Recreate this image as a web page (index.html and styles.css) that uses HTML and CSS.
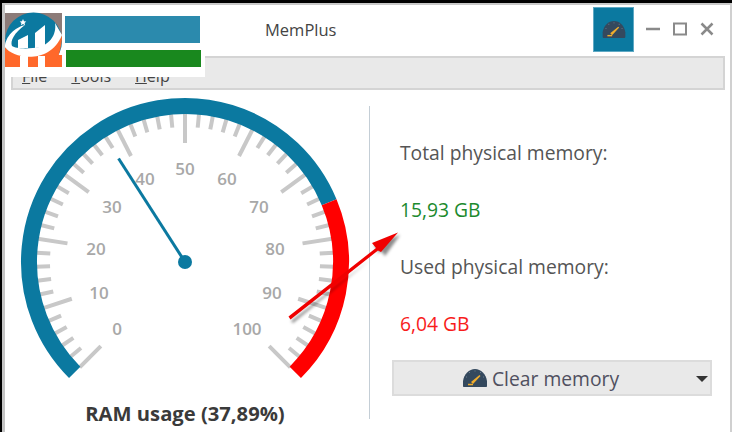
FILE: index.html
```html
<!DOCTYPE html>
<html lang="en">
<head>
  <meta charset="UTF-8">
  <title>MemPlus</title>
  <link rel="stylesheet" href="styles.css">
</head>
<body>
  <svg class="icon-defs" width="0" height="0">
    <symbol id="dash-icon" viewBox="0 0 24 18">
      <path d="M0 17c0-1 0-3 0-5C1 5 6 0 12 0s11 5 12 12c0 2 0 4 0 5 0 .6-.4 1-1 1H1c-.6 0-1-.4-1-1z" fill="#34495e"/>
      <path d="M6 3.500h1M11.500 2h1M17 3.500h1M3 8h1M20 8h1" stroke="#6d7c8c" stroke-width="1"/>
      <path d="M8 13L16.500 6l1 1L10 15z" fill="#f0ad2c"/>
      <path d="M5 15.500h5" stroke="#f0ad2c" stroke-width="1.500"/>
    </symbol>
  </svg>

  <div class="window">
    <header class="titlebar">
      <div class="title">MemPlus</div>
      <div class="dash-btn"><svg width="24" height="17"><use href="#dash-icon"/></svg></div>
      <div class="win-controls">
        <svg width="14" height="14" viewBox="0 0 14 14"><path d="M0 7h14" stroke="#8a8a8a" stroke-width="2.500"/></svg>
        <svg width="14" height="14" viewBox="0 0 14 14"><rect x="1" y="1.500" width="12" height="11" fill="none" stroke="#8a8a8a" stroke-width="2"/></svg>
        <svg width="14" height="14" viewBox="0 0 14 14"><path d="M1.500 1.500l11 11M12.500 1.500l-11 11" stroke="#8a8a8a" stroke-width="2.500"/></svg>
      </div>
    </header>

    <nav class="menu">
      <span><u>F</u>ile</span>
      <span><u>T</u>ools</span>
      <span><u>H</u>elp</span>
    </nav>

    <main class="content">
      <section class="gauge-panel">
        <svg id="gauge" class="gauge" width="360" height="300" viewBox="0 0 360 300"></svg>
        <div class="gauge-label">RAM usage (37,89%)</div>
      </section>

      <section class="info-panel">
        <div class="info-label">Total physical memory:</div>
        <div class="info-value green">15,93 GB</div>
        <div class="info-label">Used physical memory:</div>
        <div class="info-value red">6,04 GB</div>
        <button class="clear-btn" type="button">
          <span class="clear-text"><svg width="24" height="18"><use href="#dash-icon"/></svg>Clear memory</span>
          <span class="caret"></span>
        </button>
      </section>
    </main>
  </div>

  <!-- pasted over the screenshot -->
  <div class="logo-block">
    <svg class="logo-mark" width="57" height="56" viewBox="0 0 57 56">
      <path d="M0 2h57v26H0z" fill="#8c7b78"/>
      <path d="M0 28h57v28H0z" fill="#fff"/>
      <path d="M0 44h57v12H0z" fill="#ff682b"/>
      <circle cx="28.500" cy="30" r="28.500" fill="#0b79a0"/>
      <path d="M57 24C57 40 50 56 46 56H0V36c10 12 45 14 57-12z" fill="#ff682b"/>
      <path d="M0 36C8 48 45 54 57 24L50 12C52 24 44 36 28 37 18 38 10 37 7 35 5 30 9 22 20 14 10 16 0 26 0 36z" fill="#fff"/>
      <path d="M15 45h8v11h-8zM33 45h7v11h-7z" fill="#fff"/>
      <path d="M13 29l10-5v13H13zM30 22l10-8v22l-10 1z" fill="#fff"/>
      <path d="M18 8l1 2.200 2.300.2-1.700 1.600.5 2.300-2.100-1.200-2.100 1.200.5-2.300-1.700-1.600 2.300-.2z" fill="#fff"/>
    </svg>
    <div class="logo-bars">
      <div class="logo-bar-blue"></div>
      <div class="logo-bar-green"></div>
    </div>
  </div>

  <svg class="arrow" width="732" height="432" viewBox="0 0 732 432">
    <defs>
      <filter id="arrow-shadow" x="-10%" y="-10%" width="120%" height="120%">
        <feGaussianBlur stdDeviation="1.500"/>
      </filter>
    </defs>
    <path d="M289 319L377 251 372 243 398 233 383 254 379 249 291 321z" fill="#000" fill-opacity=".45" filter="url(#arrow-shadow)" transform="translate(2 2)"/>
    <path d="M288.500 316.500L376 248 372 243 398 232.500 381 252 378 250.500 290.500 319.500z" fill="#f00000"/>
  </svg>

  <script src="gauge.js"></script>
</body>
</html>
```

FILE: styles.css
```css
* {
  box-sizing: border-box;
}

html, body {
  margin: 0;
  height: 100%;
  overflow: hidden;
}

body {
  font-family: 'Open Sans', sans-serif;
  background-color: #000000;
  color: #555555;
  position: relative;
}

.icon-defs {
  position: absolute;
}

.window {
  margin: 3px 0 0 2px;
  height: 429px;
  background-color: #ffffff;
  border-top: 2px solid #c9c9c9;
  border-left: 3px solid #c4c4c4;
  border-right: 2px solid #d0d0d0;
}

.titlebar {
  height: 49px;
  display: flex;
  align-items: flex-start;
  position: relative;
}

.title {
  position: absolute;
  left: 260px;
  top: 14px;
  font-size: 16.500px;
  line-height: 22px;
  color: #444444;
}

.dash-btn {
  margin: 2px 0 0 588px;
  width: 41px;
  height: 45px;
  background-color: #0b79a0;
  border: 1px solid #5fa9c4;
  display: flex;
  align-items: center;
  justify-content: center;
}

.win-controls {
  margin: 17px 0 0 12px;
  display: flex;
  gap: 13px;
}

.menu {
  margin: 2px 5px 0 6px;
  height: 34px;
  padding: 8px 0 0 9px;
  display: flex;
  gap: 24px;
  background-color: #e9e9e9;
  border: 2px solid #d4d4d4;
  font-size: 16px;
  line-height: 20px;
  color: #444444;
}

.content {
  display: flex;
  height: 343px;
}

.gauge-panel {
  width: 364px;
  position: relative;
}

.gauge {
  display: block;
  margin: 5px 0 0 0;
}

.gauge-label {
  position: absolute;
  left: 0;
  top: 311px;
  width: 360px;
  text-align: center;
  font-size: 20.200px;
  line-height: 24px;
  font-weight: bold;
  color: #3a3a3a;
}

.info-panel {
  margin-top: 16px;
  height: 313px;
  border-left: 1px solid #c4ced6;
  padding: 35px 0 0 22px;
  flex: 1;
}

.info-label {
  font-size: 19.300px;
  line-height: 24px;
  margin-left: 8px;
  color: #555555;
}

.info-value {
  font-size: 19.300px;
  line-height: 24px;
  margin: 33px 0 33px 8px;
}

.green {
  color: #1c8a2e;
}

.red {
  color: #f81c1c;
}

.clear-btn {
  position: relative;
  display: block;
  margin-top: -9px;
  width: 320px;
  height: 36px;
  background-color: #e9e9e9;
  border: 2px solid #dcdcdc;
  padding: 0 22px 0 0;
  font: inherit;
  font-size: 19.300px;
  color: #505060;
}

.clear-text {
  display: flex;
  align-items: center;
  justify-content: center;
  gap: 5px;
}

.caret {
  position: absolute;
  right: 2px;
  top: 14px;
  border-left: 6px solid transparent;
  border-right: 6px solid transparent;
  border-top: 6px solid #333333;
}

.logo-block {
  position: absolute;
  left: 5px;
  top: 5px;
  width: 200px;
  height: 72px;
  background-color: #ffffff;
  display: flex;
  padding-top: 6px;
}

.logo-mark {
  flex: none;
}

.logo-bars {
  margin-left: 3px;
}

.logo-bar-blue {
  width: 135px;
  height: 27px;
  margin-top: 5px;
  background-color: #2b8aad;
}

.logo-bar-green {
  width: 135px;
  height: 17px;
  margin: 7px 0 0 1px;
  background-color: #19881e;
}

.arrow {
  position: absolute;
  left: 0;
  top: 0;
  pointer-events: none;
}
```

FILE: gauge.js
```js
// Gauge drawn around a fixed centre, angles in degrees from straight up
const svg = document.getElementById('gauge');
const NS = 'http://www.w3.org/2000/svg';
const cx = 180;
const cy = 167;
const value = 37.89;

// label centres, they don't sit on a clean circle
const labels = [
  [112, 234], [94, 198], [91, 154], [107, 112], [140, 84], [180, 74],
  [222, 84], [254, 112], [270, 154], [267, 198], [242, 234]
];

function angleFor(v) {
  return -135 + v * 2.7;
}

function point(r, deg) {
  const a = deg * Math.PI / 180;
  return [cx + r * Math.sin(a), cy - r * Math.cos(a)];
}

function add(tag, attrs, text) {
  const el = document.createElementNS(NS, tag);
  Object.keys(attrs).forEach(k => el.setAttribute(k, attrs[k]));
  if (text !== undefined) el.textContent = text;
  svg.appendChild(el);
  return el;
}

function band(from, to, color) {
  const r = 156;
  const [x1, y1] = point(r, angleFor(from));
  const [x2, y2] = point(r, angleFor(to));
  const large = angleFor(to) - angleFor(from) > 180 ? 1 : 0;
  add('path', {
    d: `M${x1} ${y1}A${r} ${r} 0 ${large} 1 ${x2} ${y2}`,
    fill: 'none', stroke: color, 'stroke-width': 16
  });
}

for (let v = 0; v <= 100; v += 2) {
  const major = v % 10 === 0;
  const [x1, y1] = point(149, angleFor(v));
  const [x2, y2] = point(major ? 119 : 135, angleFor(v));
  add('line', { x1, y1, x2, y2, stroke: '#c8c8c8', 'stroke-width': 4 });
}

band(0, 75, '#0b79a0');
band(75, 100, '#ff0000');

labels.forEach(([x, y], i) => {
  add('text', {
    x, y: y + 6, 'text-anchor': 'middle',
    'font-size': 17, 'font-weight': 600, fill: '#a8a8a8'
  }, i * 10);
});

const [nx, ny] = point(123, angleFor(value));
add('line', { x1: cx, y1: cy, x2: nx, y2: ny, stroke: '#0b79a0', 'stroke-width': 3 });
add('circle', { cx, cy, r: 7, fill: '#0b79a0' });
```
